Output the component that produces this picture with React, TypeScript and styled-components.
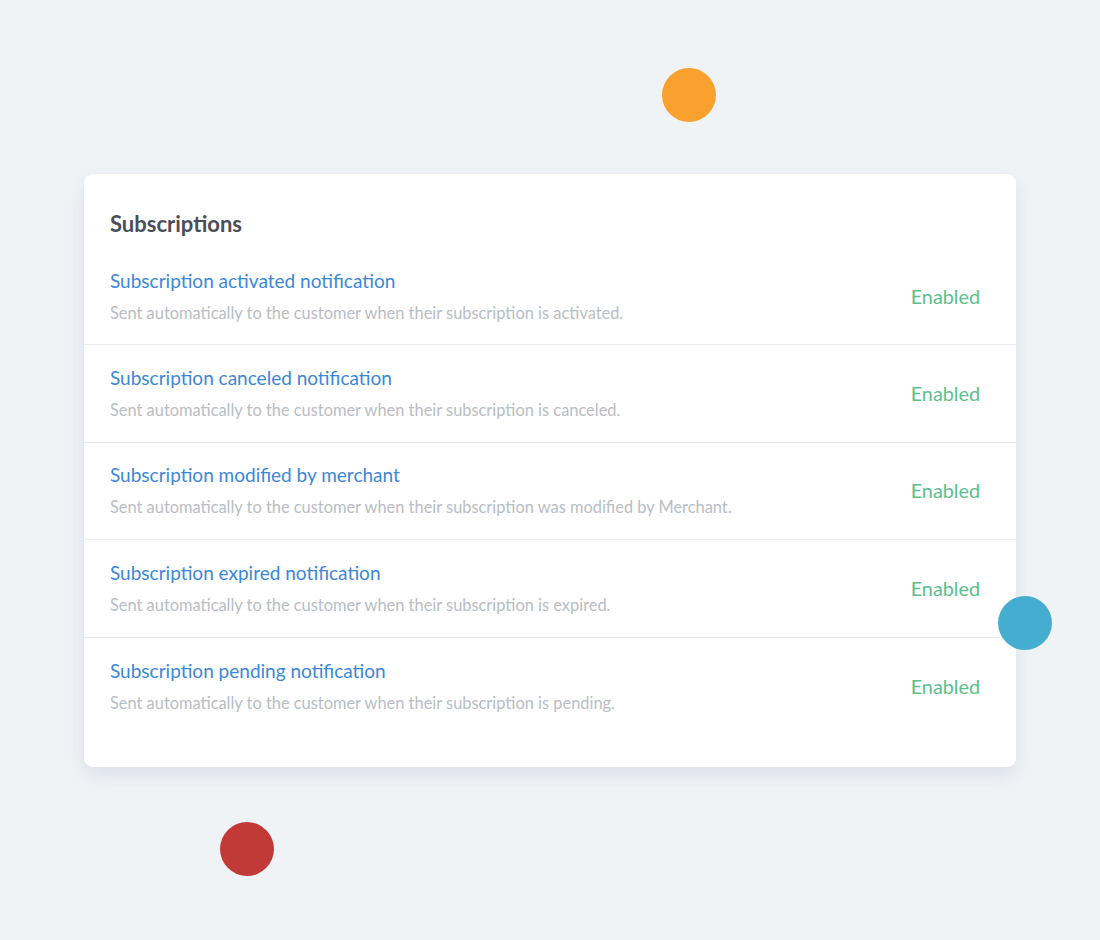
import React from "react";
import styled, { createGlobalStyle } from "styled-components";

const Global = createGlobalStyle`
  html, body { margin: 0; padding: 0; background: #f0f3f6; }
  body { font-family: Lato, "Open Sans", sans-serif; }
`;

const Page = styled.div`
  position: relative;
  width: 1100px;
  height: 940px;
  overflow: hidden;
  padding: 174px 0 0 84px;
  box-sizing: border-box;
`;

const Card = styled.section`
  width: 932px;
  background: #ffffff;
  border-radius: 9px;
  box-shadow: 0 8px 18px rgba(180, 190, 205, 0.35);
  padding: 38px 0 32px;
  box-sizing: border-box;
`;

const Heading = styled.h2`
  margin: 0 0 12px;
  padding: 0 26px;
  font-size: 22px;
  line-height: 24px;
  font-weight: 700;
  color: #4a4e58;
`;

const Row = styled.div<{ $last?: boolean }>`
  display: flex;
  align-items: center;
  justify-content: space-between;
  padding: 21px 36px 22px 26px;
  height: 97.4px;
  box-sizing: border-box;
  border-bottom: ${(p) => (p.$last ? "none" : "1px solid #e9ecef")};
`;

const Texts = styled.div`
  display: flex;
  flex-direction: column;
  gap: 10px;
`;

const Title = styled.a`
  font-size: 19px;
  line-height: 24px;
  color: #3b87d9;
  text-decoration: none;
`;

const Desc = styled.div`
  font-size: 16.4px;
  line-height: 20px;
  color: #b9bdc4;
`;

const Status = styled.span`
  font-size: 19.8px;
  line-height: 24px;
  color: #5cbf8e;
`;

const Dot = styled.div<{ $x: number; $y: number; $c: string }>`
  position: absolute;
  left: ${(p) => p.$x - 27}px;
  top: ${(p) => p.$y - 27}px;
  width: 54px;
  height: 54px;
  border-radius: 50%;
  background: ${(p) => p.$c};
`;

const items = [
  ["Subscription activated notification", "Sent automatically to the customer when their subscription is activated."],
  ["Subscription canceled notification", "Sent automatically to the customer when their subscription is canceled."],
  ["Subscription modified by merchant", "Sent automatically to the customer when their subscription was modified by Merchant."],
  ["Subscription expired notification", "Sent automatically to the customer when their subscription is expired."],
  ["Subscription pending notification", "Sent automatically to the customer when their subscription is pending."],
];

export default function App() {
  return (
    <Page>
      <Global />
      <Card>
        <Heading>Subscriptions</Heading>
        {items.map(([t, d], i) => (
          <Row key={t} $last={i === items.length - 1}>
            <Texts>
              <Title href="#">{t}</Title>
              <Desc>{d}</Desc>
            </Texts>
            <Status>Enabled</Status>
          </Row>
        ))}
      </Card>
      <Dot $x={689} $y={95} $c="#f9a12e" />
      <Dot $x={1025} $y={623} $c="#45aed0" />
      <Dot $x={247} $y={849} $c="#c23a38" />
    </Page>
  );
}
